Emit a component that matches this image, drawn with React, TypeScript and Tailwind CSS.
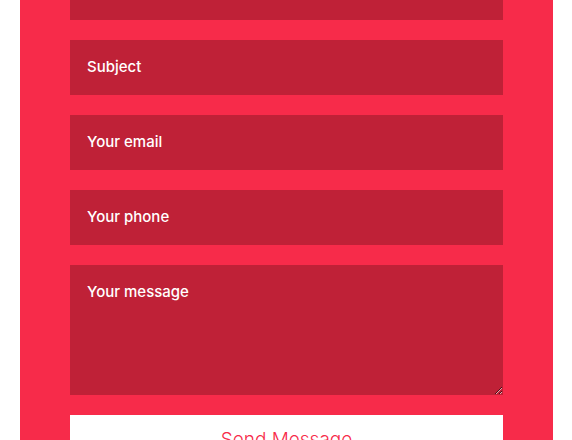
import React from "react";

const FIELDS = ["Your name", "Subject", "Your email", "Your phone"];

export default function App() {
  return (
    <div className="min-h-screen bg-white pl-5" style={{ fontFamily: "Inter, 'Noto Sans', sans-serif" }}>
      <div className="flex w-[533px] flex-col gap-5 bg-[#f72b4a] px-[50px] pb-10">
        {FIELDS.map((f, i) => (
          <input
            key={f}
            type="text"
            placeholder={f}
            className={
              "h-[55px] w-full bg-[#bf2137] px-[17px] pb-[2px] text-[15px] font-medium text-white placeholder:text-white outline-none" +
              (i === 0 ? " -mt-[35px]" : "")
            }
          />
        ))}
        <textarea
          placeholder="Your message"
          className="block h-[130px] w-full bg-[#bf2137] px-[17px] pt-[15px] text-[15px] font-medium leading-6 text-white placeholder:text-white outline-none"
        />
        <button
          type="button"
          className="h-[55px] w-full bg-white pb-[4px] text-[19px] font-light text-[#f72b4a]"
        >
          Send Message
        </button>
      </div>
    </div>
  );
}
